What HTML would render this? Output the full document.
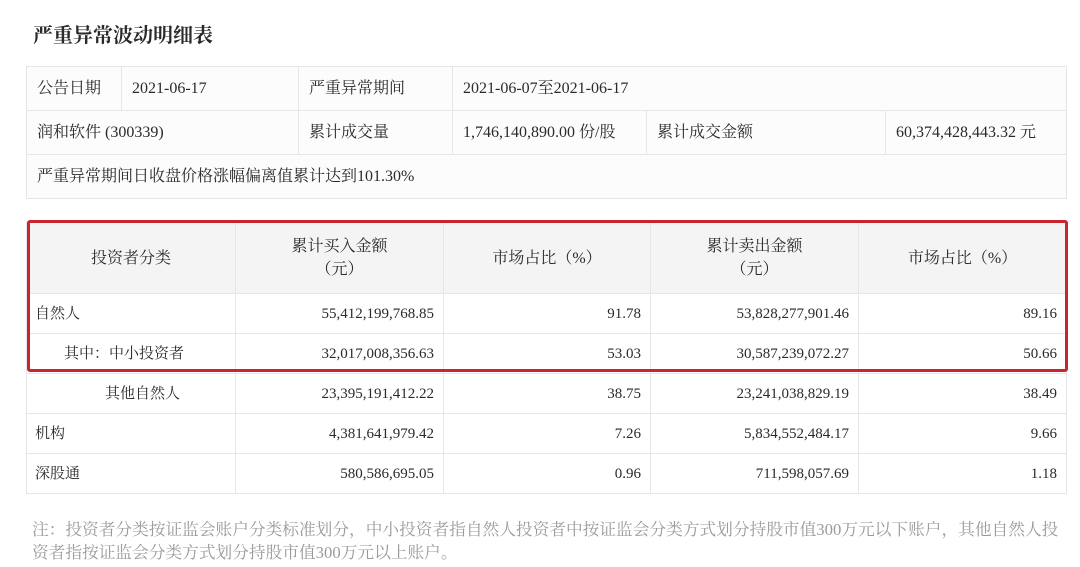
<!DOCTYPE html>
<html><head><meta charset="utf-8"><style>
body{margin:0;width:1080px;height:567px;background:#fff;font-family:"Liberation Serif","Noto Serif CJK SC",serif;color:#333;position:relative;overflow:hidden}
.t{position:absolute;left:33px;top:19px;font-size:20px;color:#2a2a2a;font-weight:bold}
table{position:absolute;border-collapse:collapse;table-layout:fixed}
td{border:1px solid #e6e6e6;font-size:16px;padding:0 10px;white-space:nowrap;vertical-align:middle;line-height:20px;color:#2a2a2a}
#a{left:26px;top:66px;width:1040px;background:#fcfcfc}
#a td{height:43px}
#b{left:26px;top:222px;width:1040px}
#b td{height:39px;text-align:right;font-size:15px;padding:0 9px}
#b tr.h td{height:70px;text-align:center;background:#f4f4f4;font-size:16px;line-height:23px}
#b td.l{text-align:left;padding-left:8px}
.red{position:absolute;left:27px;top:220px;width:1035px;height:146px;border:3px solid #c9252c;border-radius:3px}
.n{position:absolute;left:32px;top:518px;width:1048px;font-size:16.7px;color:#9a9a9a;line-height:23px;white-space:nowrap}
</style></head><body>
<div class="t">严重异常波动明细表</div>
<table id="a">
<colgroup><col style="width:95px"><col style="width:177px"><col style="width:154px"><col style="width:194px"><col style="width:239px"><col style="width:181px"></colgroup>
<tr><td>公告日期</td><td>2021-06-17</td><td>严重异常期间</td><td colspan="3">2021-06-07至2021-06-17</td></tr>
<tr><td colspan="2">润和软件 (300339)</td><td>累计成交量</td><td>1,746,140,890.00 份/股</td><td>累计成交金额</td><td>60,374,428,443.32 元</td></tr>
<tr><td colspan="6">严重异常期间日收盘价格涨幅偏离值累计达到101.30%</td></tr>
</table>
<table id="b">
<colgroup><col style="width:209px"><col style="width:208px"><col style="width:207px"><col style="width:208px"><col style="width:208px"></colgroup>
<tr class="h"><td>投资者分类</td><td>累计买入金额<br>（元）</td><td>市场占比（%）</td><td>累计卖出金额<br>（元）</td><td>市场占比（%）</td></tr>
<tr><td class="l">自然人</td><td>55,412,199,768.85</td><td>91.78</td><td>53,828,277,901.46</td><td>89.16</td></tr>
<tr><td class="l" style="padding-left:37px">其中：中小投资者</td><td>32,017,008,356.63</td><td>53.03</td><td>30,587,239,072.27</td><td>50.66</td></tr>
<tr><td class="l" style="padding-left:78px">其他自然人</td><td>23,395,191,412.22</td><td>38.75</td><td>23,241,038,829.19</td><td>38.49</td></tr>
<tr><td class="l">机构</td><td>4,381,641,979.42</td><td>7.26</td><td>5,834,552,484.17</td><td>9.66</td></tr>
<tr><td class="l">深股通</td><td>580,586,695.05</td><td>0.96</td><td>711,598,057.69</td><td>1.18</td></tr>
</table>
<div class="red"></div>
<div class="n">注：投资者分类按证监会账户分类标准划分，中小投资者指自然人投资者中按证监会分类方式划分持股市值300万元以下账户，其他自然人投<br>资者指按证监会分类方式划分持股市值300万元以上账户。</div>
</body></html>
